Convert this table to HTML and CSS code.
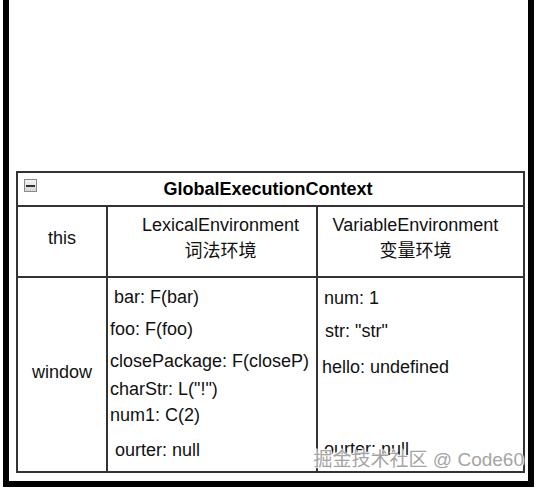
FILE: index.html
```html
<!DOCTYPE html>
<html lang="zh">
<head>
<meta charset="utf-8">
<title>GlobalExecutionContext</title>
<link rel="stylesheet" href="styles.css">
</head>
<body>
<div class="frame">
  <div class="diagram">
    <div class="title">
      <span class="toggle"><span class="toggle-bar"></span></span>
      <span class="title-text">GlobalExecutionContext</span>
      <span></span>
    </div>
    <div class="grid">
      <div class="cell head col1"><div class="line">this</div></div>
      <div class="cell head col2">
        <div class="hline">LexicalEnvironment</div>
        <div class="hline"><span class="cjk">词法环境</span></div>
      </div>
      <div class="cell head col3">
        <div class="hline">VariableEnvironment</div>
        <div class="hline"><span class="cjk">变量环境</span></div>
      </div>
      <div class="cell body col1"><div class="line window">window</div></div>
      <div class="cell body col2 list">
        <div class="line l-bar">bar: F(bar)</div>
        <div class="line l-foo">foo: F(foo)</div>
        <div class="line l-close">closePackage: F(closeP)</div>
        <div class="line l-char">charStr: L("!")</div>
        <div class="line l-num1">num1: C(2)</div>
        <div class="line l-out">ourter: null</div>
      </div>
      <div class="cell body col3 list">
        <div class="line v-num">num: 1</div>
        <div class="line v-str">str: "str"</div>
        <div class="line v-hello">hello: undefined</div>
        <div class="line v-out">ourter: null</div>
      </div>
    </div>
  </div>
  <div class="watermark">掘金技术社区 @ Code60</div>
</div>
</body>
</html>
```

FILE: styles.css
```css
html, body {
  margin: 0;
  padding: 0;
  background: #fff;
}

body {
  font-family: "Liberation Sans", Arial, "Noto Sans CJK SC", sans-serif;
  font-size: 18px;
  color: #111;
}

.frame {
  position: relative;
  box-sizing: border-box;
  width: 531px;
  height: 487px;
  margin-left: 3px;
  padding-top: 171px;
  padding-left: 7px;
  border-left: 6px solid #000;
  border-right: 6px solid #000;
  border-bottom: 6px solid #000;
  background: #fff;
}

.diagram {
  box-sizing: border-box;
  width: 509px;
  border: 2px solid #333;
}

.title {
  height: 32px;
  border-bottom: 2px solid #333;
  display: grid;
  grid-template-columns: 1fr auto 1fr;
  align-items: center;
}

.toggle {
  justify-self: start;
  align-self: start;
  margin: 6px 0 0 6px;
  box-sizing: border-box;
  width: 13px;
  height: 13px;
  border: 1px solid #8a8a8a;
  background: linear-gradient(#f4f4f4, #d6d6d6);
  display: flex;
  align-items: center;
  justify-content: center;
}

.toggle-bar {
  width: 9px;
  height: 2px;
  background: #303030;
}

.title-text {
  font-weight: bold;
  line-height: 20px;
  color: #000;
  padding-right: 5px;
}

.grid {
  display: grid;
  grid-template-columns: 90px 210px 205px;
  grid-template-rows: 71px 193px;
}

.cell {
  box-sizing: border-box;
}

.col1, .col2 {
  border-right: 2px solid #333;
}

.head {
  border-bottom: 2px solid #333;
  text-align: center;
}

.head.col1 {
  padding-top: 21px;
}

.head.col2 {
  padding-top: 6px;
  padding-left: 17px;
}

.head.col3 {
  padding-top: 6px;
  padding-right: 10px;
}

.hline {
  line-height: 24px;
}

.cjk {
  font-family: "Noto Sans CJK SC", sans-serif;
}

.line {
  line-height: 20px;
  white-space: nowrap;
}

.body.col1 {
  text-align: center;
  padding-top: 84px;
}

.list {
  display: flex;
  flex-direction: column;
}

.col2.list {
  padding-left: 2px;
}

.l-bar { margin-top: 9px; padding-left: 4px; }
.l-foo { margin-top: 12px; }
.l-close { margin-top: 12px; }
.l-char { margin-top: 8px; }
.l-num1 { margin-top: 6px; }
.l-out { margin-top: 15px; padding-left: 5px; }

.v-num { margin-top: 10px; padding-left: 6px; }
.v-str { margin-top: 13px; padding-left: 7px; }
.v-hello { margin-top: 16px; padding-left: 4px; }
.v-out { margin-top: 62px; padding-left: 6px; }

.watermark {
  position: absolute;
  right: 4px;
  bottom: 9px;
  font-family: "Liberation Sans", Arial, "Noto Sans CJK SC", sans-serif;
  font-size: 19px;
  line-height: 24px;
  color: #a4a4a4;
  white-space: nowrap;
  text-shadow: 0 0 1px #fff, 1px 1px 1px #fff, -1px -1px 1px #fff;
}
```
